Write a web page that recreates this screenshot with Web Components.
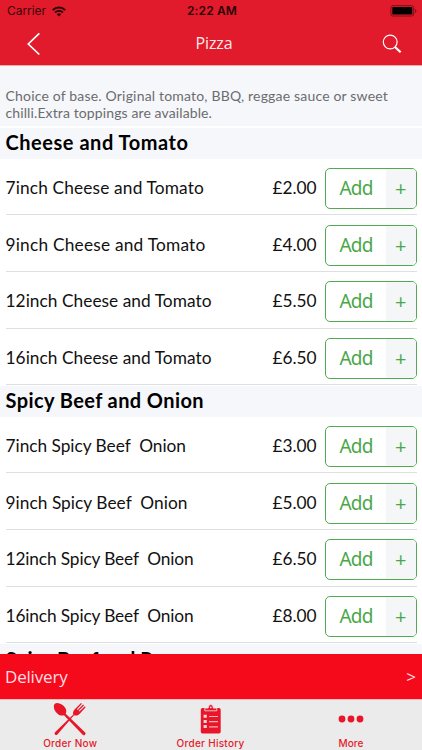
<!DOCTYPE html>
<html lang="en">
<head>
<meta charset="utf-8">
<title>Pizza</title>
<style>
html,body{margin:0;height:100%;overflow:hidden;background:#fff}
body{font-family:Lato,"Open Sans",sans-serif}
</style>
</head>
<body>
<menu-app></menu-app>
<script>
const define = (name, html, setup) => customElements.define(name, class extends HTMLElement {
  connectedCallback() {
    if (this.shadowRoot) return;
    const root = this.attachShadow({ mode: 'open' });
    root.innerHTML = typeof html === 'function' ? html(this) : html;
    if (setup) setup(this, root);
  }
});

/* One line of text, tracked so that it spans the width in its "w" attribute. */
define('fit-text', '<style>:host{display:inline-block;white-space:pre;flex:none}</style><slot></slot>', el => {
  const w = +el.getAttribute('w');
  const n = el.textContent.length;
  const natural = el.getBoundingClientRect().width;
  if (w && n) {
    const gap = (w - natural) / n;
    el.style.letterSpacing = gap.toFixed(3) + 'px';
  }
});

define('status-bar', `
<style>
:host{display:grid;grid-template-columns:1fr auto 1fr;align-items:center;height:22px;padding:0 5px 0 7px;font:12px/22px Inter,sans-serif;color:#3b0509}
.l{display:flex;align-items:center;gap:6px}
.time{font-weight:600;color:#2b0306}
.battery{justify-self:end;display:block}
svg{display:block}
</style>
<div class="l"><fit-text w="39">Carrier</fit-text>
<svg width="14" height="11" viewBox="0 0 14 11" fill="none" stroke="#260205" stroke-width="1.9"><path d="M.7 4.1a9 9 0 0 1 12.6 0M3 6.5a5.8 5.8 0 0 1 8 0"/><path d="M7 10.5 4.8 8.2a3.2 3.2 0 0 1 4.4 0z" fill="#260205" stroke="none"/></svg></div>
<fit-text class="time" w="50">2:22 AM</fit-text>
<svg class="battery" width="27" height="12" viewBox="0 0 27 12"><rect x=".9" y=".7" width="22.8" height="10.3" rx="2" fill="none" stroke="#7d0e17"/><rect x="2.3" y="2.1" width="20" height="7.5" rx=".8" fill="#000"/><path d="M25 4v4q1.4-.5 1.4-2T25 4z" fill="#7d0e17"/></svg>`);

define('nav-bar', `
<style>
:host{display:grid;grid-template-columns:1fr auto 1fr;align-items:center;height:43px;padding:0 20px 0 26px;color:#fde9eb}
.find{justify-self:end}
fit-text{font:16px/43px "Open Sans",sans-serif}
svg{display:block}
</style>
<svg width="15" height="24" viewBox="0 0 15 24" fill="none" stroke="#fff" stroke-width="1.7"><path d="M13.3 1.3 2.3 12l11 10.5"/></svg>
<fit-text w="37">Pizza</fit-text>
<svg class="find" width="20" height="20" viewBox="0 0 20 20" fill="none" stroke="#fff"><circle cx="8.2" cy="8" r="6.9" stroke-width="1.2"/><path d="m13 13 5.6 5.2" stroke-width="2.2"/></svg>`);

define('section-title', `
<style>
:host{display:flex;align-items:center;height:30.6px;padding:0 5.5px;box-sizing:border-box;background:#f6f7fa;color:#000;font:700 20px/28px Lato,sans-serif;padding-bottom:2px}
</style><slot></slot>`);

define('add-button', `
<style>
:host{display:flex;box-sizing:border-box;width:91.5px;height:41px;border:1.3px solid #50aa4f;border-radius:5px;overflow:hidden;color:#4aa749;background:#fff}
.a{flex:1;display:flex;justify-content:center;font:19px/39px "Noto Sans",sans-serif}
.p{width:29.5px;background:#f5f6f8;display:flex;align-items:center;justify-content:center;font:20px/39px "Open Sans",sans-serif}
</style><div class="a"><fit-text w="33">Add</fit-text></div><div class="p">+</div>`);

define('menu-item', el => `
<style>
:host{display:flex;align-items:center;box-sizing:border-box;height:56.65px;margin:0 5.5px;border-bottom:1px solid #dedfe1;font:17.3px/24px Lato,sans-serif;color:#111;padding-top:4px}
.n{flex:1}
.n,.price{padding-bottom:1px}
add-button{margin-left:8.5px}
</style>
<div class="n"><fit-text w="${el.getAttribute('w')}">${el.getAttribute('name')}</fit-text></div>
<fit-text class="price" w="44">${el.getAttribute('price')}</fit-text>
<add-button></add-button>`);

define('delivery-bar', `
<style>
:host{display:flex;align-items:center;justify-content:space-between;height:45px;padding:0 6px 0 5px;background:#f50a1c;color:#ffdfe2;font:17px/45px "Open Sans",sans-serif;box-sizing:border-box}
</style><fit-text w="62.5">Delivery</fit-text><span>&gt;</span>`);

define('tab-item', el => `
<style>
:host{display:flex;flex-direction:column;align-items:center;width:140.4px;color:#e31b2b;font:500 10px/12px Inter,sans-serif}
.i{height:37px;display:flex;align-items:center;justify-content:center}
</style><div class="i"><slot></slot></div><fit-text w="${el.getAttribute('w')}">${el.getAttribute('label')}</fit-text>`);

define('tab-bar', `
<style>
:host{display:flex;height:51px;background:#ebebeb;border-top:1px solid #f8b8bd;box-sizing:border-box}
svg{display:block}
</style>
<tab-item label="Order Now" w="54"><svg width="34" height="34" viewBox="0 0 34 34" fill="#e9162a"><path d="M1.5 1.9C4.8-.3 10 2.4 12.5 6.2c1.200 2 .8 4.300.2 5.500l19.500 18.800q.8 1.200-.2 2.200t-2.300 0L11 13.200c-1.800.7-4.200.5-6.200-1.200C1.200 9-.1 4.300 1.500 1.900z"/><path d="M2 30.200 20.300 12.500c-.8-2 .1-4 1.700-5.600L28 1l.9.8-5 5.400.8.7 5.400-5.300.9.9-5.300 5.300.7.7 5.400-5.200.8.9-5.600 6.200c-2 2-4.200 2.700-6 1.900L4.400 32.500Q3 33.600 2 32.500t0-2.300z"/></svg></tab-item>
<tab-item label="Order History" w="68"><svg width="22" height="32" viewBox="0 0 22 32"><path d="M2.500 5H19q1.700 0 1.700 1.700v22.100q0 1.700-1.700 1.700H2.500Q.8 30.500.8 28.800V6.700Q.8 5 2.500 5z" fill="#e9162a"/><path d="M4.800 7.800V5.100h3.400Q8.200 1.500 10.800 1.500t2.600 3.600h3.400v2.700z" fill="#e9162a" stroke="#ebebeb" stroke-width=".8"/><circle cx="10.800" cy="4.300" r=".9" fill="#ebebeb"/><path d="M3.600 11.700h3.200v3H3.600zm0 5.200h3.200v3H3.600zm0 5.200h3.200v3H3.600z" fill="#f8d4d7"/><path d="M9 13.500h9M9 18.600h9M9 23.800h9" stroke="#f3b2b7" stroke-width="1.200"/></svg></tab-item>
<tab-item label="More" w="25"><svg width="26" height="8" viewBox="0 0 26 8" fill="#e9162a"><circle cx="4" cy="4" r="3.400"/><circle cx="13" cy="4" r="3.400"/><circle cx="22" cy="4" r="3.400"/></svg></tab-item>`);

define('menu-app', `
<style>
:host{display:flex;flex-direction:column;width:422px;height:750px;background:#fff;overflow:hidden}
header{background:#e11b2b;flex:none}
main{flex:1;min-height:0;overflow:hidden;border-top:1px solid #f3a6ac}
.intro{box-sizing:border-box;height:61px;padding:21px 5.5px 0;background:#f6f7fa;color:#6b6c6f;font:14px/17px Lato,sans-serif;display:flex;flex-direction:column;align-items:flex-start;border-bottom:1px solid #fff}
.next{margin-top:1px}
delivery-bar,tab-bar{flex:none}
</style>
<header><status-bar></status-bar><nav-bar></nav-bar></header>
<main>
<div class="intro"><fit-text w="382.5">Choice of base. Original tomato, BBQ, reggae sauce or sweet</fit-text><fit-text w="206.5">chilli.Extra toppings are available.</fit-text></div>
<section-title class="next"><fit-text w="183">Cheese and Tomato</fit-text></section-title>
<menu-item name="7inch Cheese and Tomato" w="198.5" price="£2.00"></menu-item>
<menu-item name="9inch Cheese and Tomato" w="200" price="£4.00"></menu-item>
<menu-item name="12inch Cheese and Tomato" w="206" price="£5.50"></menu-item>
<menu-item name="16inch Cheese and Tomato" w="206" price="£6.50"></menu-item>
<section-title class="next"><fit-text w="198.5">Spicy Beef and Onion</fit-text></section-title>
<menu-item name="7inch Spicy Beef  Onion" w="180.5" price="£3.00"></menu-item>
<menu-item name="9inch Spicy Beef  Onion" w="182" price="£5.00"></menu-item>
<menu-item name="12inch Spicy Beef  Onion" w="188" price="£6.50"></menu-item>
<menu-item name="16inch Spicy Beef  Onion" w="188" price="£8.00"></menu-item>
<section-title class="next"><fit-text w="198">Spicy Beef and Pepper</fit-text></section-title>
</main>
<delivery-bar></delivery-bar>
<tab-bar></tab-bar>`);
</script>
</body>
</html>
